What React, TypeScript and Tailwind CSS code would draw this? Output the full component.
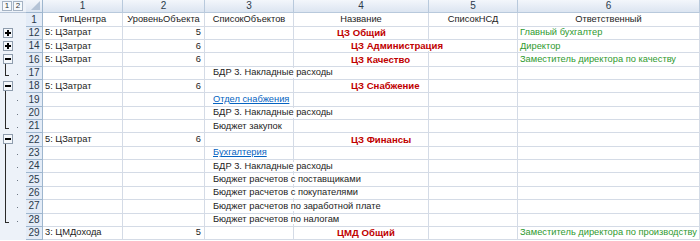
import React from "react";

type Row = {
  n: number;
  btn?: "+" | "-";
  child?: boolean;
  last?: boolean;
  type?: string;
  level?: string;
  obj?: string;
  link?: boolean;
  name?: string;
  indent?: 5 | 6;
  resp?: string;
};

const ROWS: Row[] = [
  { n: 12, btn: "+", type: "5: ЦЗатрат", level: "5", name: "ЦЗ Общий", indent: 5, resp: "Главный бухгалтер" },
  { n: 14, btn: "+", type: "5: ЦЗатрат", level: "6", name: "ЦЗ Администрация", indent: 6, resp: "Директор" },
  { n: 16, btn: "-", type: "5: ЦЗатрат", level: "6", name: "ЦЗ Качество", indent: 6, resp: "Заместитель директора по качеству" },
  { n: 17, child: true, last: true, obj: "БДР 3. Накладные расходы" },
  { n: 18, btn: "-", type: "5: ЦЗатрат", level: "6", name: "ЦЗ Снабжение", indent: 6 },
  { n: 19, child: true, obj: "Отдел снабжения", link: true },
  { n: 20, child: true, obj: "БДР 3. Накладные расходы" },
  { n: 21, child: true, last: true, obj: "Бюджет закупок" },
  { n: 22, btn: "-", type: "5: ЦЗатрат", level: "6", name: "ЦЗ Финансы", indent: 6 },
  { n: 23, child: true, obj: "Бухгалтерия", link: true },
  { n: 24, child: true, obj: "БДР 3. Накладные расходы" },
  { n: 25, child: true, obj: "Бюджет расчетов с поставщиками" },
  { n: 26, child: true, obj: "Бюджет расчетов с покупателями" },
  { n: 27, child: true, obj: "Бюджет расчетов по заработной плате" },
  { n: 28, child: true, last: true, obj: "Бюджет расчетов по налогам" },
  { n: 29, type: "3: ЦМДохода", level: "5", name: "ЦМД Общий", indent: 5, resp: "Заместитель директора по производству" },
];

const COLS = ["ТипЦентра", "УровеньОбъекта", "СписокОбъектов", "Название", "СписокНСД", "Ответственный"];

const cell = "relative border-r border-b border-[#d4dbe6] h-full flex items-center overflow-visible";

function OutlineButton({ sign }: { sign: "+" | "-" }) {
  return (
    <div className="absolute left-[3px] top-[1px] w-[10px] h-[10px] border border-[#8e9cad] bg-[#f4f7fb] flex items-center justify-center z-10">
      <div className="relative w-[6px] h-[2px] bg-black">
        {sign === "+" && <div className="absolute left-[2px] top-[-2px] w-[2px] h-[6px] bg-black" />}
      </div>
    </div>
  );
}

function Outline({ row }: { row: Row }) {
  return (
    <div className="relative h-full bg-[#edf2f9]">
      {row.btn && <OutlineButton sign={row.btn} />}
      {row.btn === "-" && <div className="absolute left-[5px] top-[11px] bottom-0 w-px bg-[#2a2a2a]" />}
      {row.child && !row.last && <div className="absolute left-[5px] top-0 bottom-0 w-px bg-[#2a2a2a]" />}
      {row.child && row.last && (
        <>
          <div className="absolute left-[5px] top-0 h-[8px] w-px bg-[#2a2a2a]" />
          <div className="absolute left-[5px] top-[8px] h-px w-[4px] bg-[#2a2a2a]" />
        </>
      )}
      {row.child && <div className="absolute left-[17px] top-[7px] w-px h-px bg-[#6d7784]" />}
    </div>
  );
}

export default function App() {
  return (
    <div className="w-[700px] h-[241px] overflow-hidden bg-white font-['Liberation_Sans',Arial,sans-serif] text-[9.3px] text-[#1c1c1c] leading-none">
      <div className="grid grid-cols-[26px_17px_80px_82px_89px_135px_89px_182px] auto-rows-[13.35px]">
        {/* column header row */}
        <div className="relative h-full bg-[#edf2f9] flex items-center gap-[1px] pl-[2px] border-b border-[#b8c6d8]">
          <div className="w-[10px] h-[10px] border border-[#a5b3c4] bg-[#f7f9fc] text-[8px] text-[#333] flex items-center justify-center">1</div>
          <div className="w-[10px] h-[10px] border border-[#a5b3c4] bg-[#f7f9fc] text-[8px] text-[#333] flex items-center justify-center">2</div>
        </div>
        <div className="relative h-full bg-gradient-to-b from-[#f3f6fb] to-[#dce5f1] border-r border-b border-[#9eb6ce]">
          <div className="absolute right-[2px] bottom-[2px] w-0 h-0 border-l-[9px] border-l-transparent border-b-[9px] border-b-[#b4c3d6]" />
        </div>
        {[1, 2, 3, 4, 5, 6].map((i) => (
          <div
            key={i}
            className="h-full bg-gradient-to-b from-[#f3f6fb] to-[#dce5f1] border-r border-b border-[#b8c9dc] flex items-center justify-center text-[#2b3a4a] text-[10px]"
          >
            {i}
          </div>
        ))}

        {/* field names row */}
        <div className="h-full bg-[#edf2f9]" />
        <div className="h-full bg-[#e4ecf7] border-r border-b border-[#9eb6ce] flex items-center justify-center text-[#2b3a4a] text-[10px]">1</div>
        {COLS.map((c) => (
          <div key={c} className={`${cell} justify-center`}>
            {c}
          </div>
        ))}

        {ROWS.map((r) => (
          <React.Fragment key={r.n}>
            <Outline row={r} />
            <div className="h-full bg-[#e4ecf7] border-r border-b border-[#9eb6ce] flex items-center justify-center text-[#2b3a4a] text-[10px]">
              {r.n}
            </div>
            <div className={`${cell} pl-[2px]`}>{r.type}</div>
            <div className={`${cell} justify-end pr-[3px]`}>{r.level}</div>
            <div className={`${cell} pl-[8px]`}>
              {r.obj && (
                <span
                  className={`relative z-10 bg-white whitespace-nowrap pr-[1px] ${
                    r.link ? "text-[#0563c1] underline underline-offset-1" : ""
                  }`}
                >
                  {r.obj}
                </span>
              )}
            </div>
            <div className={`${cell} ${r.indent === 5 ? "pl-[43px]" : "pl-[57px]"}`}>
              {r.name && (
                <span className="relative z-10 bg-white whitespace-nowrap font-bold text-[9.6px] text-[#c00000] pr-[1px]">
                  {r.name}
                </span>
              )}
            </div>
            <div className={cell} />
            <div className={`${cell} pl-[2px]`}>
              {r.resp && <span className="whitespace-nowrap text-[#2f9a2f]">{r.resp}</span>}
            </div>
          </React.Fragment>
        ))}
      </div>
    </div>
  );
}
